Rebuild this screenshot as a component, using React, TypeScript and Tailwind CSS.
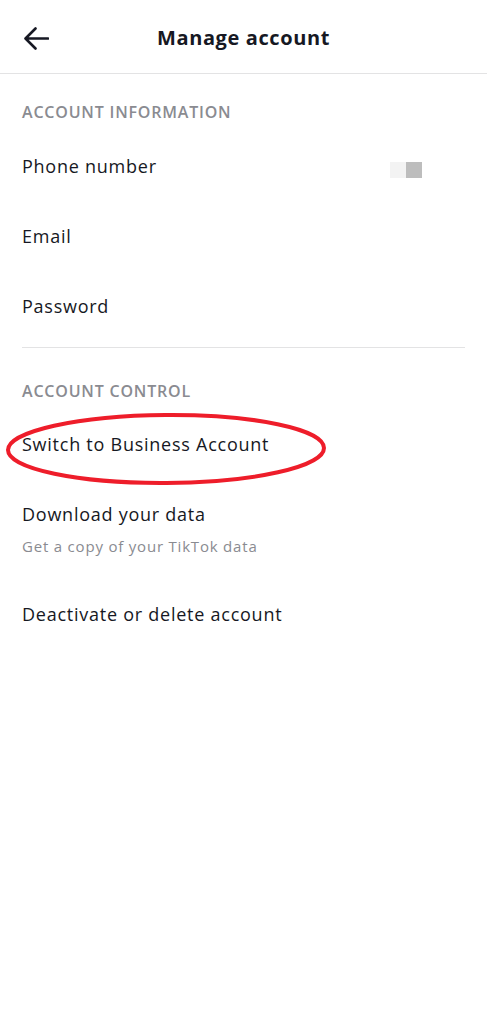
const font = { fontFamily: '"Open Sans", "Liberation Sans", sans-serif' };

function Row({ title, sub, extra }: { title: string; sub?: string; extra?: React.ReactNode }) {
  return (
    <div className={`flex items-start justify-between pt-[1px] ${sub ? "h-[100px]" : "h-[70px]"}`}>
      <div>
        <div className="text-[18px] leading-[24px] tracking-[0.75px] text-[#161823]">{title}</div>
        {sub && <div className="mt-[11px] text-[15px] leading-[18px] tracking-[0.8px] text-[#8a8b91]">{sub}</div>}
      </div>
      {extra}
    </div>
  );
}

export default function App() {
  return (
    <div className="min-h-screen w-full bg-white" style={font}>
      <header className="relative h-[74px] flex items-center justify-center border-b border-[#e3e3e4]">
        <button className="absolute left-[24px] top-[27px]">
          <svg width="25" height="23" viewBox="0 0 25 23" fill="none" stroke="#161823" strokeWidth="2.6" strokeLinecap="round" strokeLinejoin="round">
            <path d="M24 11.5H2M11.5 1.5L1.5 11.5L11.5 21.5" />
          </svg>
        </button>
        <h1 className="text-[20px] font-bold tracking-[0.6px] text-[#161823] mt-[2px]">Manage account</h1>
      </header>

      <main className="px-[22px]">
        <section className="pt-[28px]">
          <h2 className="text-[16px] leading-[20px] tracking-[0.8px] text-[#8a8b91] font-semibold">ACCOUNT INFORMATION</h2>
          <div className="mt-[31px]">
            <Row
              title="Phone number"
              extra={
                <div className="flex mt-[8px] mr-[43px]">
                  <div className="w-[16px] h-[16px] bg-[#f3f3f3]" />
                  <div className="w-[16px] h-[16px] bg-[#bdbdbd]" />
                </div>
              }
            />
            <Row title="Email" />
            <Row title="Password" />
          </div>
        </section>

        <div className="border-t border-[#e3e3e4] -mt-[16px]" />

        <section className="pt-[33px]">
          <h2 className="text-[16px] leading-[20px] tracking-[0.8px] text-[#8a8b91] font-semibold">ACCOUNT CONTROL</h2>
          <div className="mt-[30px] relative">
            <svg className="absolute -left-[18px] -top-[20px] pointer-events-none" width="324" height="78" viewBox="0 0 324 78" fill="none">
              <ellipse cx="162" cy="38" rx="158" ry="34" stroke="#ee1d2a" strokeWidth="4" transform="rotate(-0.4 162 38)" />
            </svg>
            <Row title="Switch to Business Account" />
            <Row title="Download your data" sub="Get a copy of your TikTok data" />
            <Row title="Deactivate or delete account" />
          </div>
        </section>
      </main>
    </div>
  );
}
